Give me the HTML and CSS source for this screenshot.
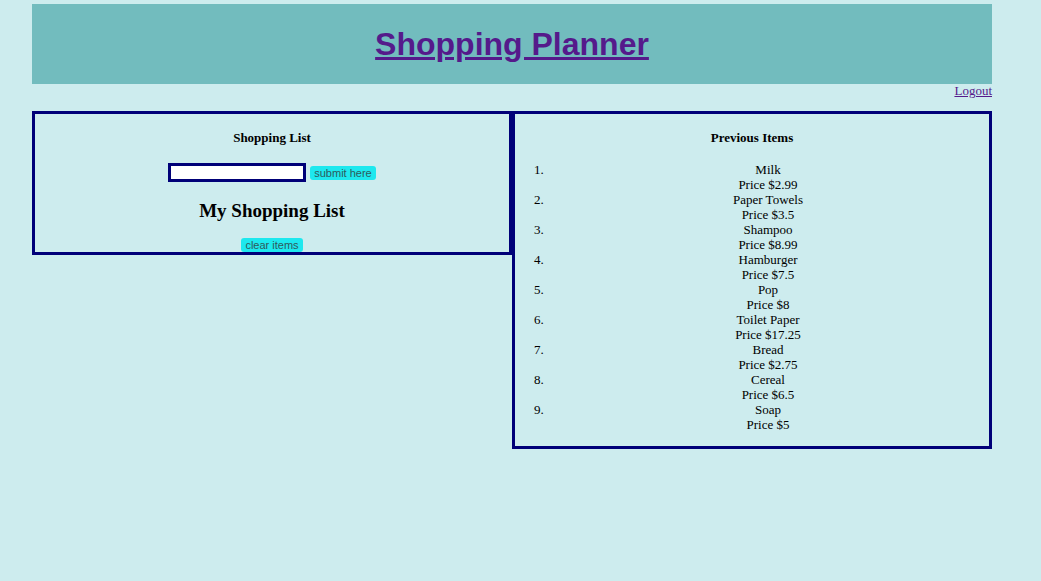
FILE: index.html
```html
<!DOCTYPE html>
<html>
<head>
<meta charset="utf-8">
<title>Shopping Planner</title>
<link rel="stylesheet" href="styles.css">
</head>
<body>
<div class="page">
  <header class="banner">
    <h1 class="title"><a href="#">Shopping Planner</a></h1>
  </header>
  <div class="userbar"><a href="#">Logout</a></div>
  <div class="panels">
    <section class="panel panel-left">
      <h4 class="panel-title">Shopping List</h4>
      <form class="add-form">
        <input class="item-input" type="text">
        <button class="btn" type="button">submit here</button>
      </form>
      <h2 class="list-title">My Shopping List</h2>
      <div class="clear-row"><button class="btn" type="button">clear items</button></div>
    </section>
    <section class="panel panel-right">
      <h4 class="panel-title">Previous Items</h4>
      <ol class="prev-list">
        <li><div>Milk</div><div>Price $2.99</div></li>
        <li><div>Paper Towels</div><div>Price $3.5</div></li>
        <li><div>Shampoo</div><div>Price $8.99</div></li>
        <li><div>Hamburger</div><div>Price $7.5</div></li>
        <li><div>Pop</div><div>Price $8</div></li>
        <li><div>Toilet Paper</div><div>Price $17.25</div></li>
        <li><div>Bread</div><div>Price $2.75</div></li>
        <li><div>Cereal</div><div>Price $6.5</div></li>
        <li><div>Soap</div><div>Price $5</div></li>
      </ol>
    </section>
  </div>
</div>
</body>
</html>
```

FILE: styles.css
```css
html, body {
  margin: 0;
  padding: 0;
  background: #cdecee;
  font-family: "Liberation Serif", "Times New Roman", serif;
  font-size: 13px;
  color: #000;
}
.page {
  width: 960px;
  margin: 4px 0 0 32px;
}
.banner {
  height: 80px;
  background: #72bcbe;
  display: flex;
  align-items: center;
  justify-content: center;
}
.title {
  margin: 0;
  font-family: "Liberation Sans", Arial, sans-serif;
  font-size: 32px;
  font-weight: bold;
  line-height: 1;
}
.title a {
  color: #551a8b;
  text-decoration: underline;
}
.userbar {
  text-align: right;
  height: 27px;
  line-height: 13px;
}
.userbar a {
  color: #551a8b;
}
.panels {
  display: flex;
  align-items: flex-start;
}
.panel {
  width: 480px;
  box-sizing: border-box;
  border: 3px solid #000078;
  text-align: center;
}
.panel-title {
  font-size: 13px;
  font-weight: bold;
  margin: 16px 0 17px;
  line-height: 15px;
}
.add-form {
  margin: 0;
  padding-top: 1px;
  display: flex;
  justify-content: center;
  align-items: center;
  gap: 4px;
  height: 19px;
}
.item-input {
  width: 138px;
  height: 19px;
  box-sizing: border-box;
  border: 3px solid #000078;
  background: #fff;
  padding: 0;
  margin: 0;
}
.btn {
  font-family: "Liberation Sans", Arial, sans-serif;
  font-size: 11px;
  line-height: 12px;
  height: 14px;
  padding: 0 4px;
  border: none;
  border-radius: 3px;
  background: #1ee8ee;
  color: #2e5a5c;
  margin: 0;
}
.list-title {
  font-size: 19px;
  font-weight: bold;
  margin: 17px 0 16px;
  line-height: 23px;
}
.clear-row {
  height: 14px;
  line-height: 14px;
}
.clear-row .btn {
  vertical-align: top;
}
.prev-list {
  margin: 0 0 14px;
  padding: 0 0 0 32px;
  line-height: 15px;
}
.prev-list li {
  text-align: center;
}
```
